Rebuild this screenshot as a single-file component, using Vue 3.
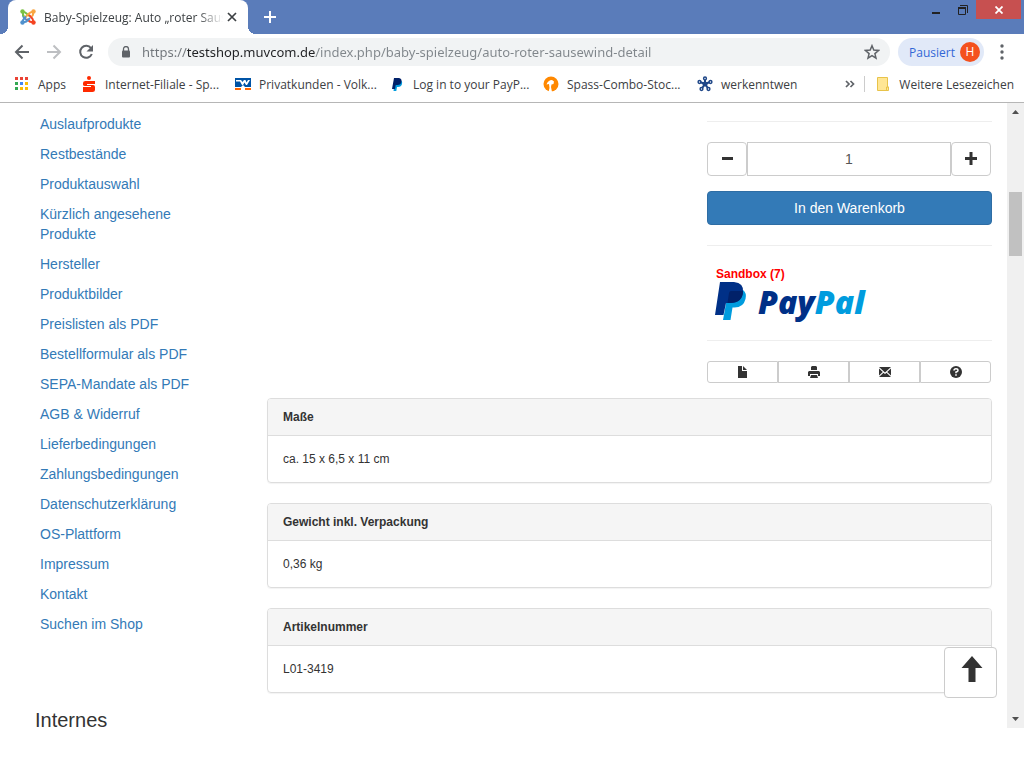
<template>
  <div class="browser">
    <header class="tabstrip">
      <div class="tab">
        <svg class="favicon" viewBox="0 0 16 16" fill="none" stroke-width="2">
          <path d="M3 4v2.500q0 1 1 2L7.500 12" stroke="#5091cd" />
          <path d="M2.500 3q2-.5 4 1.500L9 7" stroke="#7ac143" />
          <path d="M13 3q-2-.5-4 1.500L5 8.500" stroke="#f9a541" />
          <path d="M13 12.500q.5-2-1.500-4L9 6" stroke="#f44321" />
          <path d="M12.500 13q-2 .5-4-1.500L7 10" stroke="#f44321" />
          <path d="M3 13q-.5-2 1.500-4L6 7.500M3.500 13q2 .5 4-1.500L10 9" stroke="#5091cd" />
          <path d="M4 7.500Q2.500 5.500 3 3.500" stroke="#7ac143" />
          <path d="M12 7.500q1.500-2 1-4" stroke="#f9a541" />
          <circle cx="2.500" cy="2.500" r="2.200" fill="#7ac143" />
          <circle cx="13.500" cy="2.500" r="2.200" fill="#f9a541" />
          <circle cx="2.500" cy="13.500" r="2.200" fill="#5091cd" />
          <circle cx="13.500" cy="13.500" r="2.200" fill="#f44321" />
        </svg>
        <span class="tab-title">Baby-Spielzeug: Auto „roter Saus</span>
        <button class="tab-close" aria-label="Tab schließen">
          <svg viewBox="0 0 10 10" width="10" height="10"><path d="M1 1l8 8M9 1L1 9" stroke="#3c4043" stroke-width="1.700" /></svg>
        </button>
      </div>
      <button class="tab-new" aria-label="Neuer Tab">
        <svg viewBox="0 0 12 12" width="12" height="12"><path d="M6 0v12M0 6h12" stroke="#fff" stroke-width="2" /></svg>
      </button>
      <div class="window-buttons">
        <button aria-label="Minimieren">
          <svg viewBox="0 0 10 10" width="10" height="10"><path d="M0 7h8v2H0z" fill="#222" /></svg>
        </button>
        <button aria-label="Verkleinern">
          <svg viewBox="0 0 10 10" width="10" height="10" fill="none" stroke="#222"><path d="M2 .5h7.500V8M.5 3v6.500h7V3" /><path d="M0 3h8" stroke-width="2" /></svg>
        </button>
        <button class="window-close" aria-label="Schließen">
          <svg viewBox="0 0 8 8" width="8" height="8"><path d="M.5.5l7 7M7.500.5l-7 7" stroke="#fff" stroke-width="1.800" /></svg>
        </button>
      </div>
    </header>

    <div class="toolbar">
      <button aria-label="Zurück">
        <svg viewBox="0 0 16 16" width="16" height="16" fill="none" stroke="#5f6368" stroke-width="2"><path d="M15 8H2M8.500 1.500L2 8l6.500 6.500" /></svg>
      </button>
      <button aria-label="Vorwärts">
        <svg viewBox="0 0 16 16" width="16" height="16" fill="none" stroke="#bdbfc2" stroke-width="2"><path d="M1 8h13M7.500 1.500L14 8l-6.500 6.500" /></svg>
      </button>
      <button aria-label="Neu laden">
        <svg viewBox="0 0 16 16" width="16" height="16"><path d="M13 4.200A6 6 0 1 0 13.800 10" fill="none" stroke="#5f6368" stroke-width="2" /><path d="M15 1v6.500H8.500z" fill="#5f6368" /></svg>
      </button>
      <div class="omnibox">
        <svg viewBox="0 0 10 12" width="10" height="12"><path d="M2.500 5V3a2.500 2.500 0 0 1 5 0v2" fill="none" stroke="#5f6368" stroke-width="1.300" /><rect x="1" y="4.500" width="8" height="7" rx="1" fill="#5f6368" /></svg>
        <input class="url" v-model="url" aria-label="Adresse" spellcheck="false" />
        <button aria-label="Lesezeichen setzen">
          <svg viewBox="0 0 16 16" width="16" height="16"><path d="M8 1.700l1.800 4.400 4.700.4-3.600 3.100 1.100 4.600L8 11.700l-4 2.500 1.100-4.600L1.500 6.500l4.700-.4z" fill="none" stroke="#5f6368" stroke-width="1.500" /></svg>
        </button>
      </div>
      <button class="profile">Pausiert <span class="avatar">H</span></button>
      <button class="menu" aria-label="Menü">
        <svg viewBox="0 0 4 16" width="4" height="16" fill="#5f6368"><circle cx="2" cy="2" r="1.700" /><circle cx="2" cy="8" r="1.700" /><circle cx="2" cy="14" r="1.700" /></svg>
      </button>
    </div>

    <nav class="bookmarks">
      <a class="apps" href="#">
        <svg viewBox="0 0 16 16">
          <rect v-for="(c, i) in appColors" :key="i" :x="1 + (i % 3) * 5" :y="1 + Math.floor(i / 3) * 5" width="3" height="3" :fill="c" />
        </svg>
        Apps
      </a>
      <a v-for="b in bookmarks" :key="b.icon" class="bookmark" href="#">
        <svg v-if="b.icon === 'sparkasse'" viewBox="0 0 16 16">
          <circle cx="8" cy="2" r="2" fill="#ff2a00" />
          <path d="M14 5H4.500Q2 5 2 7v1.500Q2 10 4 10h6v1H2v5h9.500q2.500 0 2.500-2v-3q0-2-2-2H6V8h8z" fill="#ff2a00" />
        </svg>
        <svg v-else-if="b.icon === 'volksbank'" viewBox="0 0 16 16">
          <path d="M0 2h16v9H0z" fill="#0054a6" />
          <path d="M1 4h5l1.500 2L9 4h1.500l1 2.500L13 4h2l-3 5h-1L9.500 6.500 8 9H7L5 5.500H1z" fill="#fff" />
          <path d="M6 11l2-2 2 2z" fill="#fff" />
          <path d="M0 12h6v2H0zM10 12h6v2h-6z" fill="#ff6600" />
        </svg>
        <svg v-else-if="b.icon === 'paypal'" viewBox="0 0 16 16">
          <path d="M6 5h6.500q1 1 .5 3-.7 3-4 3H8l-.7 4H4.500z" fill="#009cde" />
          <path d="M5 2h5q3 .5 2.500 3.500Q12 9 8.500 9H6.700L6 13H3z" fill="#012169" />
        </svg>
        <svg v-else-if="b.icon === 'combo'" viewBox="0 0 16 16">
          <circle cx="8" cy="8" r="7.500" fill="#f80" />
          <path d="M3.500 8.500Q5 4 9 4l2 1.500-.5 2.500-2 .5-.5 2.500L9 16H5.500l1-4-.5-4z" fill="#fff" />
        </svg>
        <svg v-else viewBox="0 0 16 16" stroke="#1f4788" stroke-width="2" fill="#fff">
          <path d="M8 8V3M8 8l5-2M8 8l3.500 5M8 8l-3.500 5M8 8L3 6" />
          <g stroke-width="1.500"><circle cx="8" cy="2.500" r="1.400" /><circle cx="13.500" cy="6" r="1.400" /><circle cx="11.500" cy="13" r="1.400" /><circle cx="4.500" cy="13" r="1.400" /><circle cx="2.500" cy="6" r="1.400" /></g>
          <circle cx="8" cy="8" r="2.500" fill="#1f4788" stroke="none" />
        </svg>
        {{ b.label }}
      </a>
      <button class="overflow" aria-label="Mehr Lesezeichen">
        <svg viewBox="0 0 10 8" width="10" height="8" fill="none" stroke="#5f6368" stroke-width="1.700"><path d="M1 1l3 3-3 3M5.500 1l3 3-3 3" /></svg>
      </button>
      <a class="more" href="#">
        <svg viewBox="0 0 16 16"><path d="M2.500 1.500h10V11h1v3.500h-11z" fill="#ffe694" stroke="#e8c34a" /><path d="M11.500 14.500V11h2" fill="none" stroke="#e8c34a" /></svg>
        Weitere Lesezeichen
      </a>
    </nav>

    <div class="viewport">
      <div class="page">
        <aside>
          <ul>
            <li v-for="item in shopLinks" :key="item"><a href="#">{{ item }}</a></li>
          </ul>
          <h3>Internes</h3>
        </aside>

        <main>
          <div class="order">
            <hr />
            <div class="quantity">
              <button aria-label="Weniger" @click="quantity = Math.max(1, quantity - 1)">
                <svg viewBox="0 0 14 14" width="14" height="14"><path d="M2 5h11v3H2z" fill="#333" /></svg>
              </button>
              <input v-model.number="quantity" type="text" aria-label="Menge" />
              <button aria-label="Mehr" @click="quantity++">
                <svg viewBox="0 0 14 14" width="14" height="14"><path d="M5.500 0h3v5H13v3H8.500v5h-3V8H1V5h4.500z" fill="#333" /></svg>
              </button>
            </div>
            <button class="cart">In den Warenkorb</button>
            <hr />
            <div class="payment">
              <p>Sandbox (7)</p>
              <svg class="paypal" viewBox="0 0 150 38" role="img" aria-label="PayPal">
                <path d="M8 38l4-22 5-8h11q4 3 2.500 9-2 8.500-11 8.500h-2L15.500 38z" fill="#009cde" />
                <path d="M5 0h14q10 1 9 10-1.500 11-13 11h-4L8.500 33H0z" fill="#003087" />
                <path d="M12.500 21l1.500-10q.5-2 2-2h12q0 12-13 12z" fill="#012169" />
                <text x="43" y="32"><tspan fill="#003087">Pay</tspan><tspan fill="#009cde">Pal</tspan></text>
              </svg>
            </div>
            <hr />
            <div class="actions">
              <button aria-label="PDF">
                <svg viewBox="0 0 12 12"><path d="M1 0h4v5h5v7H1zM6 0l4 4H6z" /></svg>
              </button>
              <button aria-label="Drucken">
                <svg viewBox="0 0 12 12"><path d="M3 4V1l1-1h4l1 1v3zM0 6l1-1h10l1 1v4h-2V8H2v2H0zM3 9h6l1 3H2z" /></svg>
              </button>
              <button aria-label="Empfehlen">
                <svg viewBox="0 0 12 12"><path d="M0 1h12L6 6.500zM0 2.500L3.800 6 0 9.500zM12 2.500V9.500L8.200 6zM0 11l4.500-4.300L6 8l1.500-1.300L12 11z" /></svg>
              </button>
              <button aria-label="Frage stellen">
                <svg viewBox="0 0 12 12"><circle cx="6" cy="6" r="6" /><path d="M4 4.500Q4 2.700 6 2.700t2 1.700Q8 5.500 6 6v1.300" fill="none" stroke="#fff" stroke-width="1.500" /><path d="M5.200 8.300h1.600v1.500H5.200z" fill="#fff" /></svg>
              </button>
            </div>
          </div>

          <section v-for="panel in panels" :key="panel.title" class="panel">
            <h4>{{ panel.title }}</h4>
            <p>{{ panel.text }}</p>
          </section>
        </main>

        <a class="to-top" href="#" aria-label="Nach oben">
          <svg viewBox="0 0 22 26" width="22" height="26"><path d="M11 0l10.500 12H14.500v14h-7V12H.5z" fill="#333" /></svg>
        </a>
      </div>

      <div class="scrollbar">
        <svg viewBox="0 0 7 4" width="7" height="4"><path d="M0 4l3.500-4L7 4z" fill="#505050" /></svg>
        <div class="track"><div class="thumb"></div></div>
        <svg viewBox="0 0 7 4" width="7" height="4"><path d="M0 0l3.500 4L7 0z" fill="#505050" /></svg>
      </div>
    </div>
  </div>
</template>

<script setup>
import { ref } from 'vue'

const url = ref('https://testshop.muvcom.de/index.php/baby-spielzeug/auto-roter-sausewind-detail')
const quantity = ref(1)

const appColors = ['#ea4335', '#ea4335', '#ea4335', '#34a853', '#4285f4', '#fbbc05', '#34a853', '#fbbc05', '#fbbc05']

const bookmarks = [
  { icon: 'sparkasse', label: 'Internet-Filiale - Sp...' },
  { icon: 'volksbank', label: 'Privatkunden - Volk...' },
  { icon: 'paypal', label: 'Log in to your PayP...' },
  { icon: 'combo', label: 'Spass-Combo-Stoc...' },
  { icon: 'wkw', label: 'werkenntwen' }
]

const shopLinks = [
  'Auslaufprodukte',
  'Restbestände',
  'Produktauswahl',
  'Kürzlich angesehene Produkte',
  'Hersteller',
  'Produktbilder',
  'Preislisten als PDF',
  'Bestellformular als PDF',
  'SEPA-Mandate als PDF',
  'AGB & Widerruf',
  'Lieferbedingungen',
  'Zahlungsbedingungen',
  'Datenschutzerklärung',
  'OS-Plattform',
  'Impressum',
  'Kontakt',
  'Suchen im Shop'
]

const panels = [
  { title: 'Maße', text: 'ca. 15 x 6,5 x 11 cm' },
  { title: 'Gewicht inkl. Verpackung', text: '0,36 kg' },
  { title: 'Artikelnummer', text: 'L01-3419' }
]
</script>

<style>
body { background: #fff; }
</style>

<style scoped>
* { box-sizing: border-box; margin: 0; padding: 0; }
.browser { font-family: "Open Sans", "Noto Sans", sans-serif; font-size: 12px; color: #3c4043; }
button { border: 0; background: none; font: inherit; color: inherit; display: flex; align-items: center; justify-content: center; }
a { text-decoration: none; color: inherit; }
svg { display: block; flex: none; }

/* tabs */
.tabstrip { display: flex; height: 34px; padding-left: 8px; background: #5a7cba; }
.tab { position: relative; display: flex; align-items: center; width: 240px; padding: 0 11px 0 12px; background: #fff; border-radius: 8px 8px 0 0; }
.tab::before, .tab::after { content: ""; position: absolute; bottom: 0; width: 8px; height: 8px; }
.tab::before { left: -8px; background: radial-gradient(circle at 0 0, transparent 8px, #fff 8px); }
.tab::after { right: -8px; background: radial-gradient(circle at 100% 0, transparent 8px, #fff 8px); }
.favicon { width: 16px; height: 16px; margin-right: 8px; }
.tab-title { flex: 1; white-space: nowrap; mask-image: linear-gradient(to right, #000 84%, transparent 98%); }
.tab-new { width: 44px; }
.window-buttons { display: flex; margin-left: auto; padding-right: 3px; height: 19px; }
.window-buttons button { width: 26px; }
.window-buttons .window-close { width: 45px; background: #c75050; }

/* address bar */
.toolbar { display: flex; align-items: center; height: 36px; padding: 0 20px 0 6px; }
.toolbar > button { width: 32px; height: 28px; }
.omnibox { flex: 1; display: flex; align-items: center; gap: 10px; height: 28px; margin: 0 8px 0 6px; padding: 0 10px 0 13px; background: #f1f3f4; border-radius: 14px; }
.url { flex: 1; min-width: 0; margin-left: 1px; border: 0; outline: 0; font: 13px "Noto Sans", sans-serif; color: transparent;
       background: linear-gradient(to right, #70757a 45px, #202124 45px, #202124 173px, #80868b 173px); background-clip: text; }
.toolbar .profile { width: 86px; justify-content: space-between; padding: 0 4px 0 11px; border-radius: 14px; background: #e1e9f8; color: #3367d6; }
.avatar { width: 20px; height: 20px; border-radius: 10px; background: #f4511e; color: #fff; line-height: 20px; text-align: center; }
.toolbar .menu { width: 4px; margin-left: 16px; }

/* bookmarks */
.bookmarks { display: flex; align-items: center; height: 33px; padding: 0 10px 4px 14px; border-bottom: 1px solid #b6b6b6; white-space: nowrap; }
.bookmarks a { display: flex; flex: none; align-items: center; gap: 8px; }
.bookmarks a svg { width: 16px; height: 16px; }
.bookmarks .apps { width: 67px; }
.bookmarks .bookmark { width: 154px; }
.bookmarks .bookmark:nth-of-type(6) { width: auto; }
.bookmarks .overflow { margin-left: auto; padding-right: 9px; }
.bookmarks .more { height: 16px; padding-left: 10px; border-left: 1px solid #ccc; }

/* web page */
.viewport { display: flex; }
.page { position: relative; flex: 1; display: grid; grid-template-columns: 267px 1fr; padding-right: 15px; font: 14px/20px "Liberation Sans", Arial, sans-serif; color: #333; }
aside { padding: 6px 60px 0 40px; }
ul { list-style: none; }
li { padding: 5px 0; color: #337ab7; }
h3 { margin: 73px 0 0 -5px; font-size: 20px; line-height: 16px; font-weight: 400; }
main { display: flex; flex-direction: column; padding-top: 18px; }
hr { border: 0; border-top: 1px solid #eee; margin-bottom: 20px; }
.order { align-self: flex-end; width: 285px; margin-bottom: 15px; }
.quantity { display: flex; margin-bottom: 15px; padding-right: 1px; }
.quantity button { width: 40px; height: 34px; border: 1px solid #ccc; border-radius: 4px; }
.quantity input { flex: 1; min-width: 0; border: 1px solid #ccc; font: inherit; color: #555; text-align: center; }
.cart { width: 100%; height: 34px; margin-bottom: 20px; border: 1px solid #2e6da4; border-radius: 4px; background: #337ab7; color: #fff; }
.payment { padding: 0 8px 20px; }
.payment p { padding-left: 1px; font-size: 12px; line-height: 16px; font-weight: 700; color: #f00; }
.paypal { width: 150px; height: 38px; overflow: visible; }
.paypal text { font: italic 800 32px "Open Sans", sans-serif; }
.actions { display: flex; padding-right: 1px; }
.actions button { flex: 1; height: 22px; border: 1px solid #ccc; }
.actions button:first-child { border-radius: 3px 0 0 3px; }
.actions button:last-child { border-radius: 0 3px 3px 0; }
.actions svg { width: 12px; height: 12px; fill: #333; }
.panel { margin-bottom: 20px; border: 1px solid #ddd; border-radius: 4px; box-shadow: 0 1px 1px rgba(0, 0, 0, 0.05); font-size: 12px; }
.panel h4 { padding: 8px 15px; border-bottom: 1px solid #ddd; background: #f5f5f5; border-radius: 3px 3px 0 0; font-size: 12px; }
.panel p { padding: 13px 15px; }
.to-top { position: absolute; right: 10px; bottom: 30px; width: 53px; height: 51px; padding: 8px 0 0 16px; border: 1px solid #ccc; border-radius: 4px; background: #fff; }

.scrollbar { display: flex; flex-direction: column; align-items: center; width: 17px; padding: 7px 0; background: #f0f0f0; }
.track { flex: 1; width: 13px; padding: 78px 0; }
.thumb { height: 64px; background: #c1c1c1; }
</style>
